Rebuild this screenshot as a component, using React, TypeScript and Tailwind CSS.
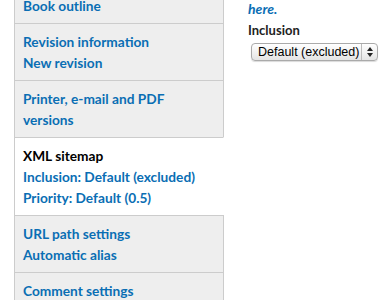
const tabs = [
  { title: 'Book outline', lines: [] as string[] },
  { title: 'Revision information', lines: ['New revision'] },
  { title: 'Printer, e-mail and PDF versions', lines: [] as string[] },
  { title: 'XML sitemap', lines: ['Inclusion: Default (excluded)', 'Priority: Default (0.5)'], active: true },
  { title: 'URL path settings', lines: ['Automatic alias'] },
  { title: 'Comment settings', lines: ['Open'] },
];

export default function App() {
  return (
    <div className="flex h-[300px] w-[391px] overflow-hidden bg-white font-['Lato',sans-serif]">
      {/* Vertical tabs */}
      <ul className="ml-[14px] mt-[-13px] w-[210px] shrink-0 self-start border-l border-[#ccc]">
        {tabs.map((tab) => (
          <li
            key={tab.title}
            className={
              tab.active
                ? 'border-t border-r border-[#ccc] border-r-white bg-white px-[8px] py-[7px] text-[13.7px] font-bold leading-[21px]'
                : 'border-t border-r border-[#ccc] bg-[#eee] px-[8px] py-[7px] text-[13.7px] font-bold leading-[21px]'
            }
          >
            <div className={tab.active ? 'text-black' : 'text-[#0a6eb4]'}>{tab.title}</div>
            {tab.lines.map((line) => (
              <div key={line} className="text-[#0a6eb4]">
                {line}
              </div>
            ))}
          </li>
        ))}
      </ul>

      {/* Pane */}
      <div className="pl-[24px]">
        <p className="mt-[-2px] text-[14px] font-bold italic leading-[21px] text-[#0a6eb4]">here.</p>
        <label className="mt-[2px] block text-[13px] font-bold leading-[18px] text-[#222]">Inclusion</label>
        <div className="ml-[3px] mt-[4px] flex h-[18px] w-[127px] items-center rounded-[4px] border border-[#aaa] bg-gradient-to-b from-white to-[#e4e4e4] shadow-[0_1px_1px_rgba(0,0,0,0.15)]">
          <span className="flex-1 pl-[6px] font-['Liberation_Sans',sans-serif] text-[12.5px] leading-[16px] text-black">
            Default (excluded)
          </span>
          <span className="flex h-full w-[16px] items-center justify-center border-l border-[#bbb]">
            <svg width="6" height="10" viewBox="0 0 6 10">
              <path d="M3 0 L6 4 L0 4 Z" fill="#222" />
              <path d="M0 6 L6 6 L3 10 Z" fill="#222" />
            </svg>
          </span>
        </div>
      </div>
    </div>
  );
}
